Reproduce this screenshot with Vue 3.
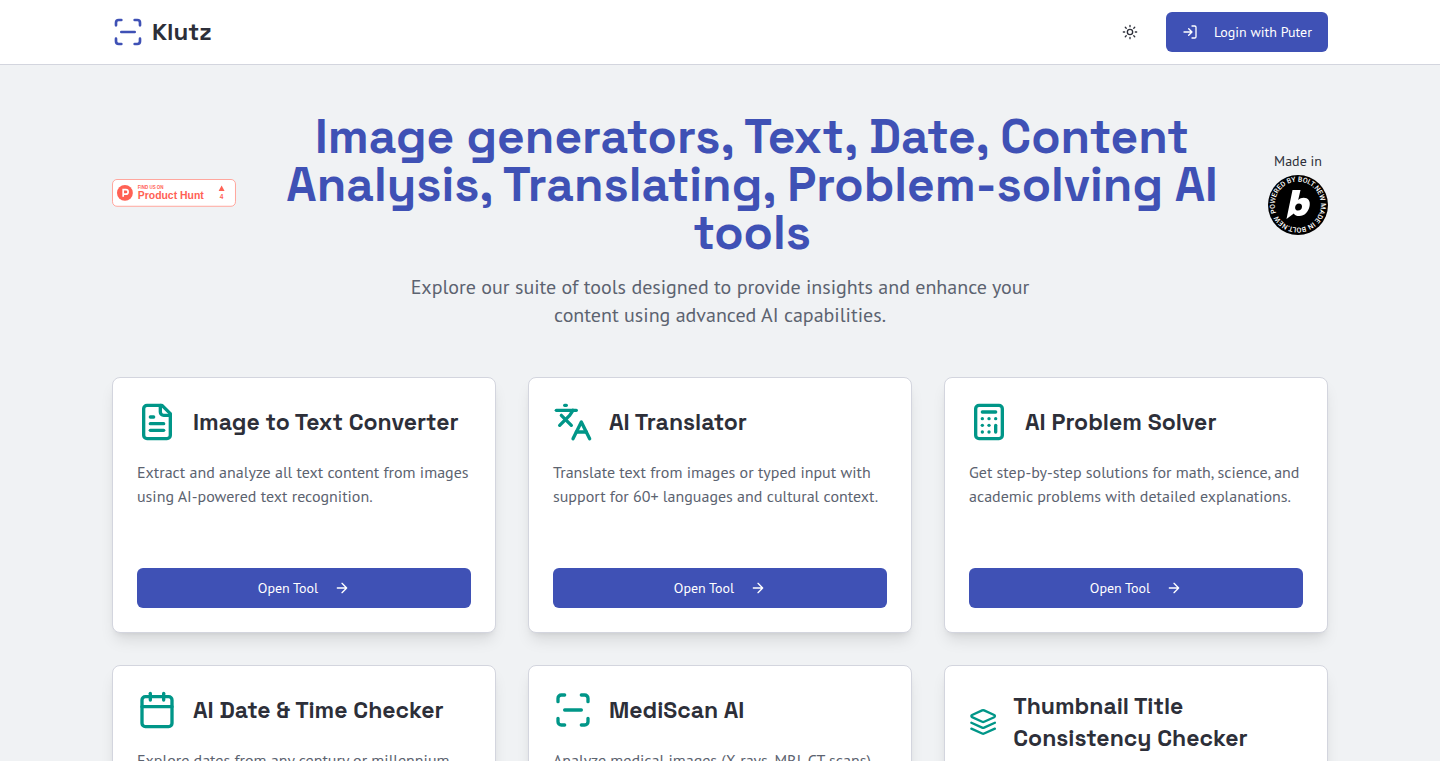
<template>
  <div class="page">
    <header class="site-header">
      <div class="container header-inner">
        <a href="#" class="brand">
          <svg class="icon brand-icon" viewBox="0 0 24 24" aria-hidden="true">
            <path v-for="d in icons.scan" :key="d" :d="d" />
          </svg>
          <span class="brand-name">Klutz</span>
        </a>
        <div class="header-actions">
          <button class="theme-button" type="button" aria-label="Toggle theme">
            <svg class="icon icon-sm" viewBox="0 0 24 24" aria-hidden="true">
              <circle cx="12" cy="12" r="4" />
              <path
                d="M12 2v2M12 20v2M4.93 4.93l1.41 1.41M17.66 17.66l1.41 1.41M2 12h2M20 12h2M6.34 17.66l-1.41 1.41M19.07 4.93l-1.41 1.41"
              />
            </svg>
          </button>
          <button class="button" type="button">
            <svg class="icon icon-sm" viewBox="0 0 24 24" aria-hidden="true">
              <path d="M15 3h4a2 2 0 0 1 2 2v14a2 2 0 0 1-2 2h-4" />
              <path d="M10 17l5-5-5-5M15 12H3" />
            </svg>
            Login with Puter
          </button>
        </div>
      </div>
    </header>

    <main class="container main">
      <section class="hero">
        <div class="hero-row">
          <a href="#" class="hunt-badge">
            <svg viewBox="0 0 250 56" role="img" aria-label="Product Hunt">
              <rect
                x="1"
                y="1"
                width="248"
                height="54"
                rx="9"
                fill="#fff"
                stroke="#ffa59c"
                stroke-width="2"
              />
              <circle cx="26" cy="28" r="16" fill="#ff6154" />
              <path
                d="M22.500 36V21.500h5.500a4.500 4.500 0 0 1 0 9h-5.500"
                fill="none"
                stroke="#fff"
                stroke-width="3.400"
              />
              <text x="52" y="21" font-size="9">FIND US ON</text>
              <text x="52" y="40" font-size="21">Product Hunt</text>
              <path d="M221 13l6 11h-12z" fill="#ff6154" />
              <text x="221" y="41" font-size="13" text-anchor="middle">4</text>
            </svg>
          </a>
          <h1>{{ heading }}</h1>
          <a href="#" class="bolt-badge">
            <span>Made in</span>
            <svg viewBox="0 0 60 60" role="img" aria-label="Bolt.new">
              <defs>
                <path id="bolt-ring" d="M8.400 37.900A23 23 0 1 1 8.600 38.400" />
              </defs>
              <circle cx="30" cy="30" r="30" />
              <text class="bolt-ring-text">
                <textPath href="#bolt-ring"
                  >POWERED BY BOLT.NEW MADE IN BOLT.NEW</textPath
                >
              </text>
              <path
                class="bolt-mark"
                fill-rule="evenodd"
                d="M24.500 15h8l-2.300 10c1.600-1.500 3.300-2.200 5.400-2.200 4.600 0 7 3.200 6 8.200-1.100 6-5.200 10-10.200 10-2.700 0-4.500-.8-5.600-2.600L18.500 44zM31 28.500c-2.300 0-3.900 2-3.900 4.200 0 1.800 1.200 2.900 2.900 2.900 2.400 0 4-1.900 4-4.200 0-1.800-1.200-2.900-3-2.900z"
              />
            </svg>
          </a>
        </div>
        <p class="lead">
          Explore our suite of tools designed to provide insights and enhance
          your content using advanced AI capabilities.
        </p>
      </section>

      <section class="tools">
        <article v-for="tool in tools" :key="tool.title" class="card">
          <div class="card-header">
            <svg class="icon card-icon" viewBox="0 0 24 24" aria-hidden="true">
              <path v-for="d in icons[tool.icon]" :key="d" :d="d" />
            </svg>
            <h2>{{ tool.title }}</h2>
          </div>
          <p class="card-text">{{ tool.description }}</p>
          <button class="button" type="button">
            Open Tool
            <svg class="icon icon-sm" viewBox="0 0 24 24" aria-hidden="true">
              <path d="M5 12h14M12 5l7 7-7 7" />
            </svg>
          </button>
        </article>
      </section>
    </main>
  </div>
</template>

<script setup>
const heading =
  "Image generators, Text, Date, Content Analysis, Translating, Problem-solving AI tools";

// Stroke paths on a 24x24 grid
const icons = {
  scan: [
    "M3 7V5a2 2 0 0 1 2-2h2",
    "M17 3h2a2 2 0 0 1 2 2v2",
    "M21 17v2a2 2 0 0 1-2 2h-2",
    "M7 21H5a2 2 0 0 1-2-2v-2",
    "M7 12h10",
  ],
  file: [
    "M15 2H6a2 2 0 0 0-2 2v16a2 2 0 0 0 2 2h12a2 2 0 0 0 2-2V7Z",
    "M14 2v4a2 2 0 0 0 2 2h4",
    "M10 9H8",
    "M16 13H8",
    "M16 17H8",
  ],
  languages: [
    "m5 8 6 6",
    "m4 14 6-6 2-3",
    "M2 5h12",
    "M7 2h1",
    "m22 22-5-10-5 10",
    "M14 18h6",
  ],
  calculator: [
    "M6 2h12a2 2 0 0 1 2 2v16a2 2 0 0 1-2 2H6a2 2 0 0 1-2-2V4a2 2 0 0 1 2-2Z",
    "M8 6h8",
    "M16 14v4",
    "M16 10h.01",
    "M12 10h.01",
    "M8 10h.01",
    "M12 14h.01",
    "M8 14h.01",
    "M12 18h.01",
    "M8 18h.01",
  ],
  calendar: [
    "M8 2v4",
    "M16 2v4",
    "M5 4h14a2 2 0 0 1 2 2v14a2 2 0 0 1-2 2H5a2 2 0 0 1-2-2V6a2 2 0 0 1 2-2Z",
    "M3 10h18",
  ],
  layers: [
    "m12.83 2.18a2 2 0 0 0-1.66 0L2.6 6.08a1 1 0 0 0 0 1.83l8.58 3.91a2 2 0 0 0 1.66 0l8.58-3.9a1 1 0 0 0 0-1.83Z",
    "m22 17.65-9.17 4.16a2 2 0 0 1-1.66 0L2 17.65",
    "m22 12.65-9.17 4.16a2 2 0 0 1-1.66 0L2 12.65",
  ],
};

const tools = [
  {
    title: "Image to Text Converter",
    icon: "file",
    description:
      "Extract and analyze all text content from images using AI-powered text recognition.",
  },
  {
    title: "AI Translator",
    icon: "languages",
    description:
      "Translate text from images or typed input with support for 60+ languages and cultural context.",
  },
  {
    title: "AI Problem Solver",
    icon: "calculator",
    description:
      "Get step-by-step solutions for math, science, and academic problems with detailed explanations.",
  },
  {
    title: "AI Date & Time Checker",
    icon: "calendar",
    description:
      "Explore dates from any century or millennium with calendar insights.",
  },
  {
    title: "MediScan AI",
    icon: "scan",
    description:
      "Analyze medical images (X-rays, MRI, CT scans) with AI-powered insights.",
  },
  {
    title: "Thumbnail Title Consistency Checker",
    icon: "layers",
    description: "Check that thumbnails and titles tell the same story.",
  },
];
</script>

<style>
body {
  margin: 0;
  background: #f0f2f4;
}
</style>

<style scoped>
.page {
  min-height: 100vh;
  color: #2d2f39;
  font-family: "PT Sans", Lato, sans-serif;
  font-size: 16px;
  line-height: 24px;
}

.container {
  box-sizing: border-box;
  width: 100%;
  max-width: 1280px;
  margin: 0 auto;
  padding: 0 32px;
}

.icon {
  fill: none;
  stroke: currentColor;
  stroke-width: 2;
  stroke-linecap: round;
  stroke-linejoin: round;
}

.icon-sm {
  width: 16px;
  height: 16px;
  flex-shrink: 0;
}

.site-header {
  background: #fff;
  border-bottom: 1px solid #d3d5de;
}

.header-inner {
  display: flex;
  align-items: center;
  justify-content: space-between;
  height: 64px;
}

.brand {
  display: flex;
  align-items: center;
  gap: 8px;
  color: inherit;
  text-decoration: none;
}

.brand-icon {
  width: 32px;
  height: 32px;
  color: #3f51b5;
}

.brand-name {
  font-family: "Space Grotesk", Inter, sans-serif;
  font-size: 24px;
  font-weight: 600;
  line-height: 32px;
}

.header-actions {
  display: flex;
  align-items: center;
  gap: 16px;
}

.theme-button {
  display: flex;
  align-items: center;
  justify-content: center;
  width: 40px;
  height: 40px;
  padding: 0;
  border: 0;
  border-radius: 6px;
  background: transparent;
  color: inherit;
  cursor: pointer;
}

.button {
  display: flex;
  align-items: center;
  justify-content: center;
  gap: 16px;
  height: 40px;
  padding: 0 16px;
  border: 0;
  border-radius: 6px;
  background: #3f51b5;
  color: #fff;
  font-family: inherit;
  font-size: 14px;
  line-height: 20px;
  cursor: pointer;
}

.button:hover {
  background: #5262bc;
}

.main {
  padding-top: 48px;
  padding-bottom: 48px;
}

.hero {
  margin-bottom: 48px;
  text-align: center;
}

.hero-row {
  display: flex;
  align-items: center;
  justify-content: space-between;
}

h1 {
  margin: 0 0 16px;
  color: #3f51b5;
  font-family: "Space Grotesk", Inter, sans-serif;
  font-size: 48px;
  font-weight: 700;
  line-height: 48px;
}

.hunt-badge {
  flex-shrink: 0;
  width: 124px;
}

.hunt-badge svg {
  display: block;
  width: 100%;
}

.hunt-badge text {
  fill: #ff6154;
  font-family: "Liberation Sans", Arial, sans-serif;
  font-weight: 700;
}

.bolt-badge {
  display: flex;
  flex-direction: column;
  align-items: center;
  flex-shrink: 0;
  gap: 4px;
  color: inherit;
  font-size: 14px;
  line-height: 20px;
  text-decoration: none;
}

.bolt-badge svg {
  width: 60px;
  height: 60px;
}

.bolt-ring-text {
  fill: #fff;
  font-family: Roboto, sans-serif;
  font-size: 7px;
  font-weight: 500;
}

.bolt-mark {
  fill: #fff;
}

.lead {
  max-width: 672px;
  margin: 0 auto;
  color: #5c6370;
  font-size: 20px;
  line-height: 28px;
}

.tools {
  display: grid;
  grid-template-columns: repeat(3, minmax(0, 1fr));
  gap: 32px;
}

.card {
  box-sizing: border-box;
  display: flex;
  flex-direction: column;
  min-height: 256px;
  padding: 24px;
  border: 1px solid #d3d5de;
  border-radius: 8px;
  background: #fff;
  box-shadow:
    0 10px 15px -3px rgba(0, 0, 0, 0.1),
    0 4px 6px -4px rgba(0, 0, 0, 0.1);
}

.card-header {
  display: flex;
  align-items: center;
  gap: 16px;
  margin-bottom: 18px;
}

.card-icon {
  width: 40px;
  height: 40px;
  color: #009688;
}

h2 {
  margin: 0;
  font-family: "Space Grotesk", Inter, sans-serif;
  font-size: 23px;
  font-weight: 600;
  line-height: 32px;
}

.card-text {
  flex-grow: 1;
  margin: 0 0 24px;
  color: #5c6370;
}

@media (max-width: 1023px) {
  .tools {
    grid-template-columns: repeat(2, minmax(0, 1fr));
  }
}

@media (max-width: 767px) {
  .hero-row {
    flex-direction: column;
    gap: 16px;
  }

  .tools {
    grid-template-columns: minmax(0, 1fr);
  }
}
</style>
